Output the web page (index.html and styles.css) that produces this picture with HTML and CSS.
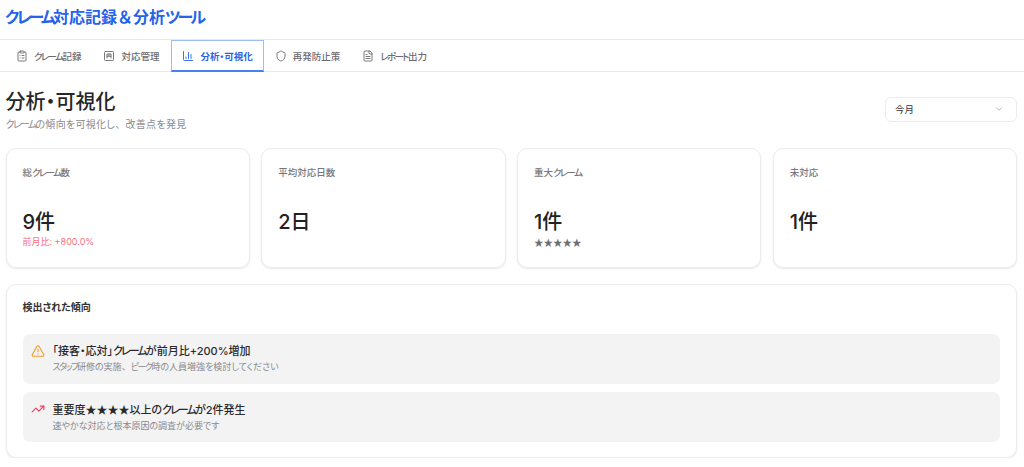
FILE: index.html
```html
<!DOCTYPE html>
<html lang="ja">
<head>
<meta charset="utf-8">
<title>クレーム対応記録＆分析ツール</title>
<link rel="stylesheet" href="styles.css">
</head>
<body>
<header class="topbar"><h1 class="brand"><span class="k">クレーム</span>対応記録<span class="fw">＆</span>分析<span class="k">ツール</span></h1></header>
<nav class="tabs">
  <a class="tab"><svg class="ico" viewBox="0 0 24 24"><rect x="8" y="2" width="8" height="4" rx="1"/><path d="M16 4h2a2 2 0 0 1 2 2v14a2 2 0 0 1-2 2H6a2 2 0 0 1-2-2V6a2 2 0 0 1 2-2h2"/><path d="M12 11h4M12 16h4M8 11h.01M8 16h.01"/></svg><span><span class="k">クレーム</span>記録</span></a>
  <a class="tab"><svg class="ico" viewBox="0 0 24 24"><rect x="3" y="3" width="18" height="18" rx="2"/><path d="M8 16V8h8v8M12 8v4.5M8 12.5h8"/></svg>対応管理</a>
  <a class="tab active"><svg class="ico" viewBox="0 0 24 24"><path d="M3 3v16a2 2 0 0 0 2 2h16"/><path d="M8 17v-3M13 17V5M18 17V9"/></svg>分析・可視化</a>
  <a class="tab"><svg class="ico" viewBox="0 0 24 24"><path d="M20 13c0 5-3.5 7.5-7.66 8.95a1 1 0 0 1-.67-.01C7.5 20.5 4 18 4 13V6a1 1 0 0 1 1-1c2 0 4.5-1.2 6.24-2.72a1.17 1.17 0 0 1 1.52 0C14.51 3.81 17 5 19 5a1 1 0 0 1 1 1z"/></svg>再発防止策</a>
  <a class="tab"><svg class="ico" viewBox="0 0 24 24"><path d="M15 2H6a2 2 0 0 0-2 2v16a2 2 0 0 0 2 2h12a2 2 0 0 0 2-2V7z"/><path d="M14 2v4a2 2 0 0 0 2 2h4M10 9H8M16 13H8M16 17H8"/></svg><span><span class="k">レポート</span>出力</span></a>
</nav>
<main class="page">
  <section class="page-head">
    <div>
      <h2 class="page-title">分析・可視化</h2>
      <p class="page-sub"><span class="k">クレーム</span>の傾向を可視化し<span class="fw">、</span>改善点を発見</p>
    </div>
    <div class="select">今月<svg class="chev" viewBox="0 0 24 24"><path d="m6 9 6 6 6-6"/></svg></div>
  </section>
  <section class="stats">
    <div class="card stat"><div class="stat-label">総<span class="k">クレーム</span>数</div><div class="stat-value">9件</div><div class="stat-note red">前月比: +800.0%</div></div>
    <div class="card stat"><div class="stat-label">平均対応日数</div><div class="stat-value">2日</div></div>
    <div class="card stat"><div class="stat-label">重大<span class="k">クレーム</span></div><div class="stat-value">1件</div><div class="stat-note stars">★★★★★</div></div>
    <div class="card stat"><div class="stat-label">未対応</div><div class="stat-value">1件</div></div>
  </section>
  <section class="card trends">
    <h3 class="trends-title">検出された傾向</h3>
    <div class="trend">
      <svg class="trend-ico orange" viewBox="0 0 24 24"><path d="m21.73 18-8-14a2 2 0 0 0-3.48 0l-8 14A2 2 0 0 0 4 21h16a2 2 0 0 0 1.73-3"/><path d="M12 9v4M12 17h.01"/></svg>
      <div><div class="trend-head">「接客・応対」<span class="k">クレーム</span>が前月比+200%増加</div><div class="trend-desc"><span class="k">スタッフ</span>研修の実施<span class="fw">、</span><span class="k">ピーク</span>時の人員増強を検討してください</div></div>
    </div>
    <div class="trend">
      <svg class="trend-ico redstroke" viewBox="0 0 24 24"><path d="M22 7l-8.5 8.5-5-5L2 17"/><path d="M16 7h6v6"/></svg>
      <div><div class="trend-head">重要度<span class="stars-inline">★★★★</span>以上の<span class="k">クレーム</span>が2件発生</div><div class="trend-desc">速やかな対応と根本原因の調査が必要です</div></div>
    </div>
  </section>
</main>
</body>
</html>
```
FILE: styles.css
```css
* { box-sizing: border-box; margin: 0; padding: 0; }
html, body { background: #fff; }
body {
  font-family: Inter, "Noto Sans CJK JP", sans-serif;
  font-feature-settings: "palt";
  color: #262626;
  overflow: hidden;
}
.k { letter-spacing: -.17em; }
.fw { font-feature-settings: normal; }
.topbar { height: 40px; padding: 7px 5px 0; border-bottom: 1px solid #e8e8ea; }
.brand { font-size: 16px; line-height: 20px; font-weight: 700; color: #2563eb; }
.tabs { display: flex; height: 32px; padding-left: 5px; border-bottom: 1px solid #e8e8ea; }
.tab {
  display: flex; align-items: center; gap: 6px;
  padding: 0 11px; font-size: 9.5px; font-weight: 500; color: #6b6b70;
}
.tab.active { color: #2563eb; font-weight: 700; border: 1px solid #9dbdf7; border-bottom: 2px solid #4a7ff0; height: 32px; padding: 0 10px; margin-left: 1px; }
.ico { width: 12px; height: 12px; fill: none; stroke: currentColor; stroke-width: 1.8; stroke-linecap: round; stroke-linejoin: round; flex: none; }
.page { padding: 0 7px 0 5.5px; }
.page-head { display: flex; justify-content: space-between; align-items: center; height: 76px; padding-bottom: 1px; }
.page-title { font-size: 20px; line-height: 28px; font-weight: 500; }
.page-sub { font-size: 10px; line-height: 14px; color: #8a8a8f; margin-top: 1px; letter-spacing: .03em; }
.select {
  width: 132px; height: 25px; padding: 0 12px 0 9px; margin-top: -1px;
  display: flex; align-items: center; justify-content: space-between;
  font-size: 9.5px; color: #333; border: 1px solid #ececee; border-radius: 6px;
}
.chev { width: 10px; height: 10px; fill: none; stroke: #a8a8ac; stroke-width: 2; stroke-linecap: round; stroke-linejoin: round; }
.stats { display: grid; grid-template-columns: repeat(4, 1fr); gap: 11.5px; }
.card { background: #fff; border: 1px solid #ececee; border-radius: 10px; box-shadow: 0 1px 2px rgba(0,0,0,.09); }
.stat { height: 119.5px; padding: 18px 16px; }
.stat-label { font-size: 9.5px; line-height: 12px; font-weight: 500; color: #77777c; }
.stat-value { font-size: 20px; line-height: 28px; font-weight: 500; margin-top: 29px; color: #222; }
.stat-note { font-size: 9px; line-height: 12px; margin-top: 0; }
.red { color: #f87180; }
.stars { font-family: "Noto Sans CJK JP", sans-serif; font-feature-settings: normal; font-size: 9.5px; color: #6f6f73; }
.stars-inline { font-family: "Noto Sans CJK JP", sans-serif; font-feature-settings: normal; }
.trends { margin-top: 16.5px; height: 174px; padding: 15px 16px; }
.trends-title { font-size: 10px; line-height: 14px; font-weight: 700; color: #333; margin-bottom: 20px; }
.trend { display: flex; gap: 8px; height: 50px; margin-bottom: 8px; padding: 10px 8px 8px; background: #f3f3f4; border-radius: 7px; }
.trend-ico { width: 14px; height: 14px; fill: none; stroke-width: 2; stroke-linecap: round; stroke-linejoin: round; flex: none; }
.orange { stroke: #f59e2c; }
.redstroke { stroke: #f43f5e; }
.trend-head { font-size: 11px; line-height: 15px; font-weight: 500; color: #2a2a2a; }
.trend-desc { font-size: 9px; line-height: 12px; margin-top: 2px; color: #8a8a8f; }
```
